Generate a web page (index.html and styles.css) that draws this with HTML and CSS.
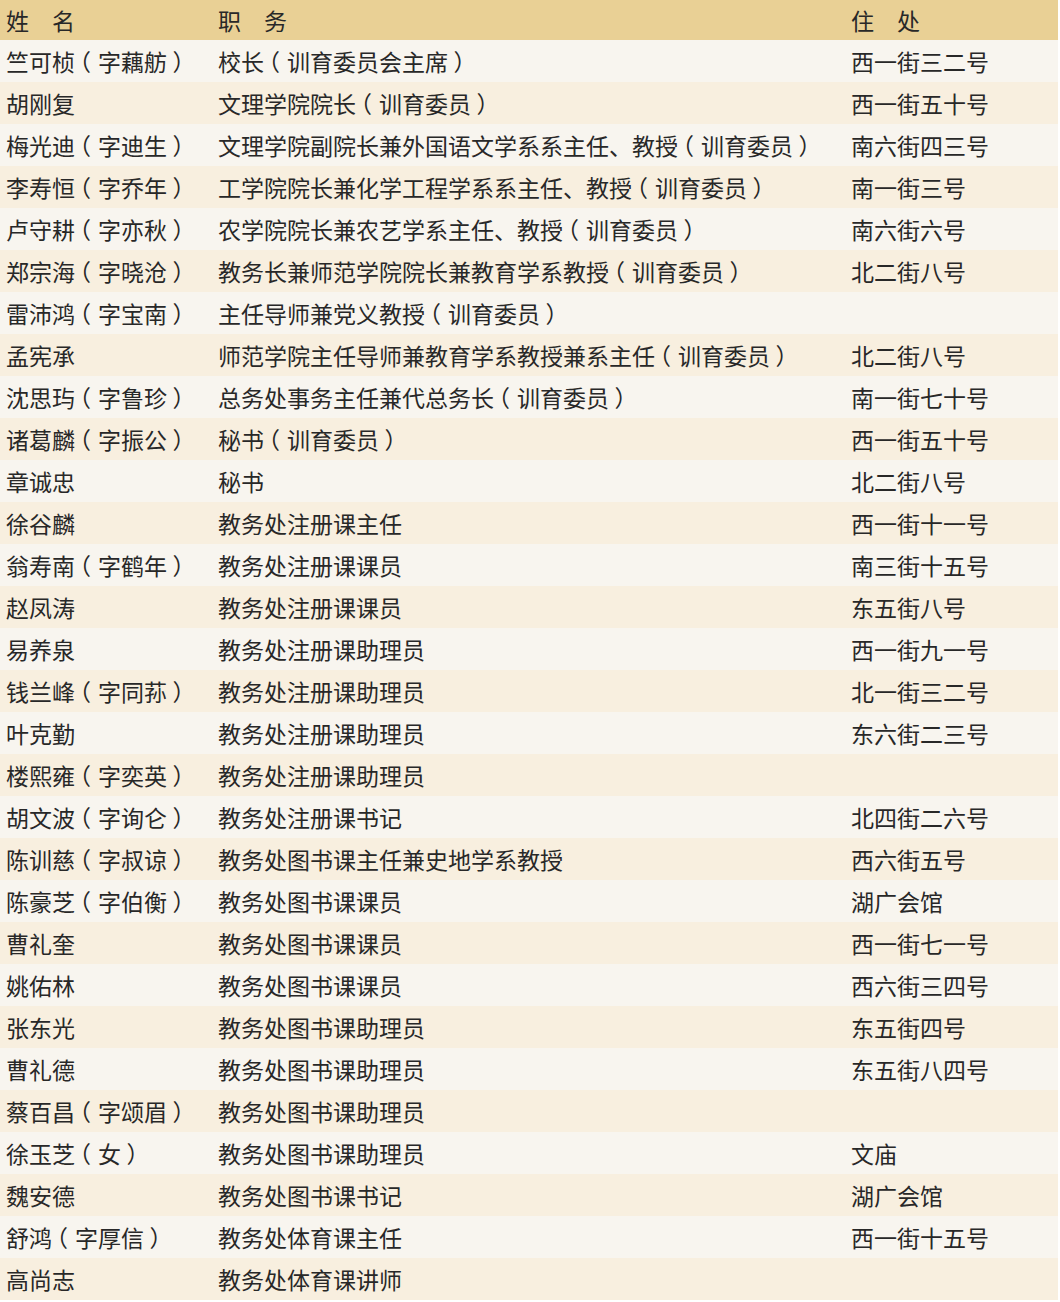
FILE: index.html
```html
<!DOCTYPE html>
<html lang="zh-CN">
<head>
<meta charset="utf-8">
<title>职员名录</title>
<link rel="stylesheet" href="styles.css">
</head>
<body>
<table class="roster">
<thead>
<tr class="head"><th class="c-name">姓　名</th><th class="c-duty">职　务</th><th class="c-addr">住　处</th></tr>
</thead>
<tbody>
<tr><td>竺可桢<span class="po">（</span>字藕舫<span class="pc">）</span></td><td>校长<span class="po">（</span>训育委员会主席<span class="pc">）</span></td><td>西一街三二号</td></tr>
<tr><td>胡刚复</td><td>文理学院院长<span class="po">（</span>训育委员<span class="pc">）</span></td><td>西一街五十号</td></tr>
<tr><td>梅光迪<span class="po">（</span>字迪生<span class="pc">）</span></td><td>文理学院副院长兼外国语文学系系主任、教授<span class="po">（</span>训育委员<span class="pc">）</span></td><td>南六街四三号</td></tr>
<tr><td>李寿恒<span class="po">（</span>字乔年<span class="pc">）</span></td><td>工学院院长兼化学工程学系系主任、教授<span class="po">（</span>训育委员<span class="pc">）</span></td><td>南一街三号</td></tr>
<tr><td>卢守耕<span class="po">（</span>字亦秋<span class="pc">）</span></td><td>农学院院长兼农艺学系主任、教授<span class="po">（</span>训育委员<span class="pc">）</span></td><td>南六街六号</td></tr>
<tr><td>郑宗海<span class="po">（</span>字晓沧<span class="pc">）</span></td><td>教务长兼师范学院院长兼教育学系教授<span class="po">（</span>训育委员<span class="pc">）</span></td><td>北二街八号</td></tr>
<tr><td>雷沛鸿<span class="po">（</span>字宝南<span class="pc">）</span></td><td>主任导师兼党义教授<span class="po">（</span>训育委员<span class="pc">）</span></td><td></td></tr>
<tr><td>孟宪承</td><td>师范学院主任导师兼教育学系教授兼系主任<span class="po">（</span>训育委员<span class="pc">）</span></td><td>北二街八号</td></tr>
<tr><td>沈思玙<span class="po">（</span>字鲁珍<span class="pc">）</span></td><td>总务处事务主任兼代总务长<span class="po">（</span>训育委员<span class="pc">）</span></td><td>南一街七十号</td></tr>
<tr><td>诸葛麟<span class="po">（</span>字振公<span class="pc">）</span></td><td>秘书<span class="po">（</span>训育委员<span class="pc">）</span></td><td>西一街五十号</td></tr>
<tr><td>章诚忠</td><td>秘书</td><td>北二街八号</td></tr>
<tr><td>徐谷麟</td><td>教务处注册课主任</td><td>西一街十一号</td></tr>
<tr><td>翁寿南<span class="po">（</span>字鹤年<span class="pc">）</span></td><td>教务处注册课课员</td><td>南三街十五号</td></tr>
<tr><td>赵凤涛</td><td>教务处注册课课员</td><td>东五街八号</td></tr>
<tr><td>易养泉</td><td>教务处注册课助理员</td><td>西一街九一号</td></tr>
<tr><td>钱兰峰<span class="po">（</span>字同荪<span class="pc">）</span></td><td>教务处注册课助理员</td><td>北一街三二号</td></tr>
<tr><td>叶克勤</td><td>教务处注册课助理员</td><td>东六街二三号</td></tr>
<tr><td>楼熙雍<span class="po">（</span>字奕英<span class="pc">）</span></td><td>教务处注册课助理员</td><td></td></tr>
<tr><td>胡文波<span class="po">（</span>字询仑<span class="pc">）</span></td><td>教务处注册课书记</td><td>北四街二六号</td></tr>
<tr><td>陈训慈<span class="po">（</span>字叔谅<span class="pc">）</span></td><td>教务处图书课主任兼史地学系教授</td><td>西六街五号</td></tr>
<tr><td>陈豪芝<span class="po">（</span>字伯衡<span class="pc">）</span></td><td>教务处图书课课员</td><td>湖广会馆</td></tr>
<tr><td>曹礼奎</td><td>教务处图书课课员</td><td>西一街七一号</td></tr>
<tr><td>姚佑林</td><td>教务处图书课课员</td><td>西六街三四号</td></tr>
<tr><td>张东光</td><td>教务处图书课助理员</td><td>东五街四号</td></tr>
<tr><td>曹礼德</td><td>教务处图书课助理员</td><td>东五街八四号</td></tr>
<tr><td>蔡百昌<span class="po">（</span>字颂眉<span class="pc">）</span></td><td>教务处图书课助理员</td><td></td></tr>
<tr><td>徐玉芝<span class="po">（</span>女<span class="pc">）</span></td><td>教务处图书课助理员</td><td>文庙</td></tr>
<tr><td>魏安德</td><td>教务处图书课书记</td><td>湖广会馆</td></tr>
<tr><td>舒鸿<span class="po">（</span>字厚信<span class="pc">）</span></td><td>教务处体育课主任</td><td>西一街十五号</td></tr>
<tr><td>高尚志</td><td>教务处体育课讲师</td><td></td></tr>
</tbody>
</table>
</body>
</html>
```
FILE: styles.css
```css
html, body {
  margin: 0;
  padding: 0;
  background: #ffffff;
}
.roster {
  width: 1058px;
  border-collapse: collapse;
  table-layout: fixed;
  font-family: "Noto Sans CJK SC", "Noto Sans", sans-serif;
  font-size: 23px;
  color: #282828;
}
.roster th, .roster td {
  padding: 0 0 0 6px;
  text-align: left;
  font-weight: normal;
  white-space: nowrap;
  vertical-align: middle;
}
.c-name { width: 206px; }
.c-duty { width: 627px; }
.roster thead tr {
  height: 40px;
  background: #e9d095;
}
.roster tbody tr {
  height: 42px;
}
.roster tbody tr:nth-child(odd) { background: #f8f5ef; }
.roster tbody tr:nth-child(even) { background: #f8efdf; }

/* full-width parentheses, set half-width and padded so the glyph sits
   in the middle of a full em, as in the source */
.po, .pc {
  font-feature-settings: "halt" 1;
}
.po {
  margin-left: 0.2em;
  margin-right: 0.3em;
}
.pc {
  margin-left: 0.24em;
  margin-right: 0.26em;
}
```
